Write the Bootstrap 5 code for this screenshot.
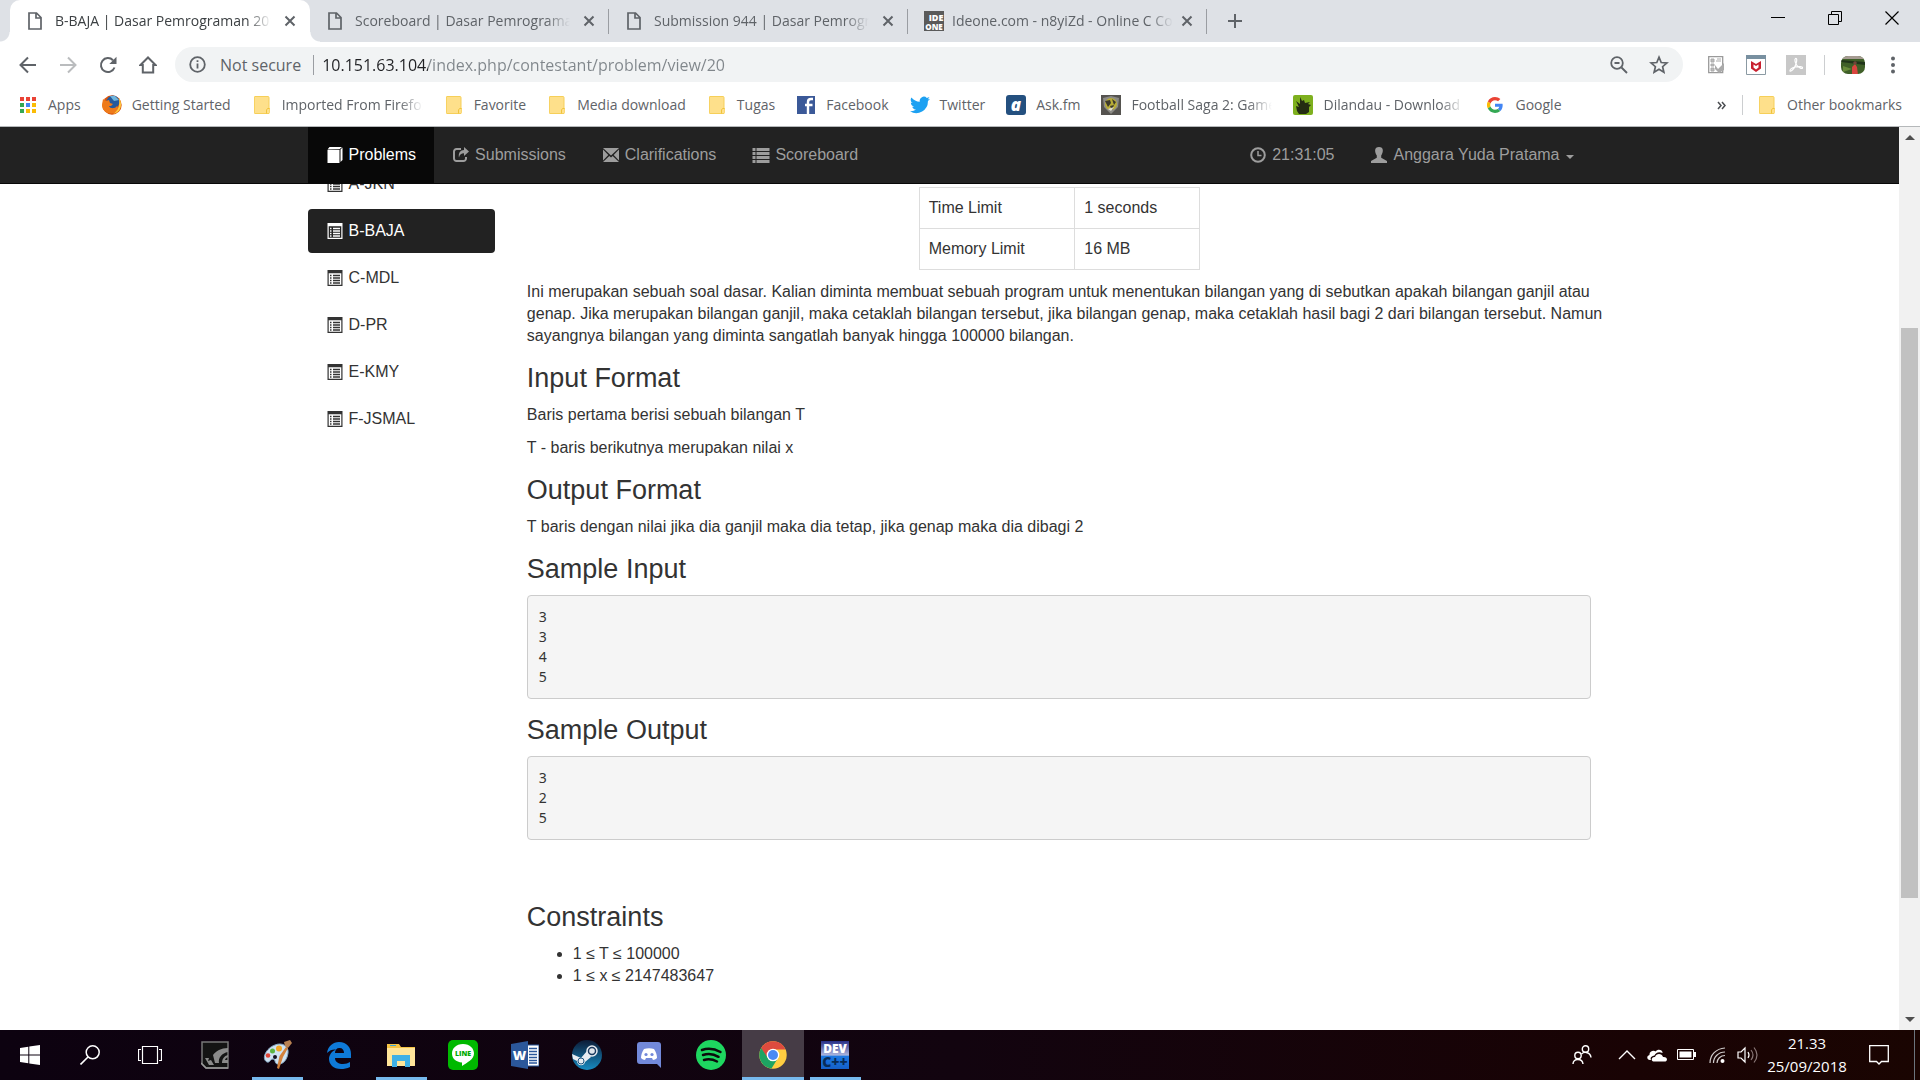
<!DOCTYPE html>
<html lang="id">
<head>
<meta charset="utf-8">
<meta name="viewport" content="width=device-width, initial-scale=1">
<title>B-BAJA | Dasar Pemrograman 2018</title>
<link href="https://cdn.jsdelivr.net/npm/bootstrap@5.3.0/dist/css/bootstrap.min.css" rel="stylesheet">
<style>
:root{--ui:"Segoe UI","Open Sans","Noto Sans",sans-serif;--page:"Liberation Sans",Arial,sans-serif}
body{height:100vh;overflow:hidden;font-family:var(--page);font-size:16px;line-height:22px;color:#333;background:#fff}
button{background:none;border:0;padding:0;color:inherit}
svg{display:block;flex:none}
svg text{font-family:"Open Sans","Noto Sans",sans-serif;font-weight:800;text-anchor:middle}
a{text-decoration:none;color:inherit}
.fade-end{overflow:hidden;white-space:nowrap;-webkit-mask-image:linear-gradient(90deg,#000 calc(100% - 24px),transparent);mask-image:linear-gradient(90deg,#000 calc(100% - 24px),transparent)}

/* browser frame */
.chrome-ui{font-family:var(--ui);color:#5f6368;flex:none}
.tabstrip{background:#dee1e6;height:42px;padding-left:10px;font-size:14px}
.tab-item{width:299px;padding:0 14px 0 18px;gap:13px;position:relative}
.tab-item .fade-end{flex:1}
.tab-item+.tab-item::after{content:"";position:absolute;right:0;top:9px;height:25px;width:1px;background:#9a9da2}
.tab-item.current{background:#fff;color:#3c4043;border-radius:10px 10px 0 0;width:300px}
.tab-item.current::before,.tab-item.current::after{content:"";position:absolute;bottom:0;width:10px;height:10px}
.tab-item.current::before{left:-10px;background:radial-gradient(circle at 0 0,transparent 9px,#fff 10px)}
.tab-item.current::after{right:-10px;background:radial-gradient(circle at 100% 0,transparent 9px,#fff 10px)}
.win-btn{width:57px;height:36px;color:#000}
.toolbar{height:45px;padding:0 7px 0 8px}
.tool-btn{width:40px;height:36px}
.omnibox{background:#f1f3f4;border-radius:18px;height:35px;margin:0 13px 0 7px;padding:0 4px 0 14px;font-size:16px}
.omnibox label{padding:0 12px 0 14px}
.omnibox input{flex:1;border:0;padding:0;outline:0;min-width:0;color:transparent;background:linear-gradient(90deg,#202124 106px,#80868b 106px);-webkit-background-clip:text;background-clip:text}
.vline{width:1px;height:20px;background:#9a9da2}
.bookmarks{height:40px;padding:0 18px 3px 20px;gap:23px;font-size:14px;border-bottom:1px solid #b5b8ba}
.bookmarks a{display:flex;align-items:center;gap:12px;white-space:nowrap}
.bookmarks a svg[width="20"]{margin:0 -2px}
.bookmarks a svg[width="18"]{margin:0 -1px}
.bookmarks .fade-end{width:141px}

/* contest site */
.viewport{flex:1;min-height:0}
.site{flex:1;min-width:0;overflow:hidden}
.wide{width:100%;max-width:1316px;margin:0 auto;padding:0 16px}
.site-nav{background:#222;border-bottom:1px solid #080808;position:relative;z-index:2;padding:0}
.site-nav .nav-link{color:#9d9d9d;padding:17px 18px;height:56px;display:flex;align-items:center;gap:5px;white-space:nowrap}
.site-nav .nav-link.active{color:#fff;background:#080808}
.site-nav .dropdown-toggle::after{margin:4px 0 0 1px;border-width:4px}
.page-row{--bs-gutter-x:32px}
.problem-list{gap:3px;margin-top:-22px}
.problem-list .nav-link{color:#333;padding:11px 18px;display:flex;align-items:center;gap:5px;border-radius:4px}
.problem-list .nav-link.active{color:#fff;background:#222}
.limits{width:281px;margin:3px auto 11px;color:#333;border-color:#ddd}
.limits td{padding:9px;height:41px;color:#333}
.problem p{margin:0 -16px 11px 0}
.problem h3{font-size:27px;line-height:29px;font-weight:400;margin:17px 0 11px}
.problem pre{background:#f5f5f5;border:1px solid #ccc;border-radius:4px;padding:11px;margin:0;font:14px/20px Consolas,"Noto Sans",monospace;color:#333}
.problem .spaced{margin-top:63px}
.problem ul{padding-left:46px;margin:0}
.scroller{width:21px;background:#f1f1f1;color:#505050}
.scroller button{height:21px;display:flex;align-items:center;justify-content:center}
.scroller .thumb{flex:570;margin:0 2px;background:#c1c1c1}

/* taskbar */
.taskbar{height:50px;flex:none;background:linear-gradient(90deg,#0d0210,#12040f 50%,#190304 85%,#1a0502);color:#fff;font-family:var(--ui)}
.taskbar button{width:62px;height:50px;display:flex;align-items:center;justify-content:center}
.taskbar .sys{width:60px}
.taskbar .open{background:linear-gradient(#76b9ed,#76b9ed) center bottom/51px 3px no-repeat}
.taskbar .focused{background:linear-gradient(#76b9ed,#76b9ed) center bottom/100% 3px no-repeat,#463c46}
.taskbar .tray{width:30px}
.taskbar .clock{width:90px;font-size:15px;line-height:23px;display:block;text-align:center}
.taskbar .notes{width:54px}
.taskbar .desktop{width:6px}
</style>
</head>
<body class="d-flex flex-column">
<svg width="0" height="0" class="position-absolute" aria-hidden="true">
<symbol id="i-file" viewBox="0 0 14 18"><path d="M1 1h7.500L13 5.500V17H1z M8 1v5h5" fill="none" stroke="#5f6368" stroke-width="1.700"/></symbol>
<symbol id="i-x" viewBox="0 0 12 12"><path d="M1.500 1.500l9 9M10.500 1.500l-9 9" stroke="#5f6368" stroke-width="2"/></symbol>
<symbol id="i-folder" viewBox="0 0 16 18"><path d="M1 .5h13a1 1 0 0 1 1 1V12l1 1v3.500l-1 1H1a.6.6 0 0 1-.6-.6V1A.6.6 0 0 1 1 .5z" fill="#fee08b" stroke="#f6cf58"/><path d="M12.500 17.500v-3.500l1-1.500h1.500" fill="none" stroke="#f0c33c"/></symbol>
<symbol id="i-list" viewBox="0 0 15 16"><path d="M0 0h15v16H0z M1.200 3.200v11.600h12.600V3.200z" fill="currentColor" fill-rule="evenodd"/><path d="M2.500 5.500h1.500M2.500 8h1.500M2.500 10.500h1.500M2.500 13h1.500M5.500 5.500h7M5.500 8h7M5.500 10.500h7M5.500 13h7" stroke="currentColor" stroke-width="1.300"/></symbol>
</svg>

<header class="chrome-ui">
 <div class="tabstrip d-flex">
  <div class="tab-item current d-flex align-items-center"><svg width="14" height="18"><use href="#i-file"/></svg><span class="fade-end">B-BAJA | Dasar Pemrograman 2018</span><button aria-label="Close tab"><svg width="12" height="12"><use href="#i-x"/></svg></button></div>
  <div class="tab-item d-flex align-items-center"><svg width="14" height="18"><use href="#i-file"/></svg><span class="fade-end">Scoreboard | Dasar Pemrograman</span><button aria-label="Close tab"><svg width="12" height="12"><use href="#i-x"/></svg></button></div>
  <div class="tab-item d-flex align-items-center"><svg width="14" height="18"><use href="#i-file"/></svg><span class="fade-end">Submission 944 | Dasar Pemrograman</span><button aria-label="Close tab"><svg width="12" height="12"><use href="#i-x"/></svg></button></div>
  <div class="tab-item d-flex align-items-center ps-3 gap-2"><svg width="20" height="20" viewBox="0 0 20 20"><path fill="#5a5a5a" d="M0 0h20v20H0z"/><text x="12" y="10" font-size="9" fill="#fff">IDE</text><text x="10" y="19" font-size="8" fill="#fff">ONE</text></svg><span class="fade-end">Ideone.com - n8yiZd - Online C Compiler</span><button aria-label="Close tab"><svg width="12" height="12"><use href="#i-x"/></svg></button></div>
  <button class="ms-3 ps-1" aria-label="New tab"><svg width="16" height="16" viewBox="0 0 16 16"><path d="M8 1v14M1 8h14" stroke="#5f6368" stroke-width="2"/></svg></button>
  <div class="d-flex ms-auto">
   <button class="win-btn" aria-label="Minimize"><svg class="mx-auto" width="14" height="14"><path d="M0 6.500h14" stroke="#000"/></svg></button>
   <button class="win-btn" aria-label="Restore"><svg class="mx-auto" width="14" height="14"><path d="M.5 3.500h10v10H.5zM3.500 3v-2.500h10v10H11" fill="none" stroke="#000"/></svg></button>
   <button class="win-btn" aria-label="Close"><svg class="mx-auto" width="14" height="14"><path d="M.5 .5l13 13M13.500 .5l-13 13" stroke="#000" stroke-width="1.200"/></svg></button>
  </div>
 </div>
 <div class="toolbar d-flex align-items-center">
  <button class="tool-btn" aria-label="Back"><svg class="mx-auto" width="18" height="18" viewBox="0 0 18 18"><path d="M17 9H2M9 1.500L1.500 9 9 16.500" fill="none" stroke="#5f6368" stroke-width="2"/></svg></button>
  <button class="tool-btn" aria-label="Forward"><svg class="mx-auto" width="18" height="18" viewBox="0 0 18 18"><path d="M1 9h15M9 1.500L16.500 9 9 16.500" fill="none" stroke="#babcbe" stroke-width="2"/></svg></button>
  <button class="tool-btn" aria-label="Reload"><svg class="mx-auto" width="18" height="18" viewBox="0 0 18 18"><path d="M15.500 11.500A7 7 0 1 1 14 4.200" fill="none" stroke="#5f6368" stroke-width="2"/><path d="M17.500 .8V8h-7.200z" fill="#5f6368"/></svg></button>
  <button class="tool-btn" aria-label="Home"><svg class="mx-auto" width="18" height="18" viewBox="0 0 18 18"><path d="M1.500 9L9 1.500 16.500 9h-2.300v7.500H3.800V9z" fill="none" stroke="#5f6368" stroke-width="2"/></svg></button>
  <div class="omnibox d-flex align-items-center flex-grow-1">
   <svg width="17" height="17" viewBox="0 0 17 17"><circle cx="8.500" cy="8.500" r="7.300" fill="none" stroke="#5f6368" stroke-width="1.800"/><path d="M8.500 7.500v5M8.500 4.300v1.800" stroke="#5f6368" stroke-width="1.800"/></svg>
   <label for="url" class="text-nowrap">Not secure</label><span class="vline me-2"></span>
   <input id="url" value="10.151.63.104/index.php/contestant/problem/view/20">
   <button class="tool-btn" aria-label="Zoom"><svg class="mx-auto" width="18" height="18" viewBox="0 0 18 18"><circle cx="7" cy="7" r="5.800" fill="none" stroke="#5f6368" stroke-width="1.800"/><path d="M11.500 11.500l5.500 5.500M4.500 7h5" stroke="#5f6368" stroke-width="1.900"/></svg></button>
   <button class="tool-btn" aria-label="Bookmark this page"><svg class="mx-auto" width="20" height="20" viewBox="0 0 20 20"><path d="M10 2.200l2.200 5.300 5.700.5-4.300 3.700 1.300 5.600L10 14.300l-4.900 3 1.300-5.600L2.100 8l5.700-.5z" fill="none" stroke="#5f6368" stroke-width="1.700"/></svg></button>
  </div>
  <button class="tool-btn" aria-label="Extension"><svg class="mx-auto" width="17" height="18" viewBox="0 0 17 18"><path d="M.7 .7h14v16H.7z" fill="#fff" stroke="#9a9a9a" stroke-width="1.300"/><path d="M3 3h3v3H3zM3 8h3v2H3zM3 12h3v3H3zM9 3h4M8 5h5" fill="#bbb" stroke="#aaa"/><path d="M7 9l3 4 6-6v7l-5 3-4-4z" fill="#aaa"/></svg></button>
  <button class="tool-btn" aria-label="McAfee"><svg class="mx-auto" width="20" height="20" viewBox="0 0 20 20"><path d="M.5 .5h19v19H.5z" fill="#fff" stroke="#8b9aa3"/><path d="M0 0h20v4H0z" fill="#7890a0"/><path d="M5 6l5 3 5-3v7.500L10 17l-5-3.500zM7.500 9.500v3l2.500 2 2.500-2v-3L10 11z" fill="#c8202f" fill-rule="evenodd"/></svg></button>
  <button class="tool-btn" aria-label="Acrobat"><svg class="mx-auto" width="20" height="20" viewBox="0 0 20 20"><path d="M0 0h20v20H0z" fill="#c8c8c8"/><path d="M9.500 3.500c-1.500 1 0 5 1.500 7s5 4 5.500 2.500-4-1.800-7.500-1-5.500 3-5 4S8.500 14 10 9s.500-6-.5-5.500z" fill="none" stroke="#fff" stroke-width="1.200"/></svg></button>
  <span class="vline mx-2 opacity-50"></span>
  <button class="tool-btn" aria-label="Profile"><svg class="mx-auto" width="24" height="20" viewBox="0 0 24 20"><defs><clipPath id="av"><rect width="24" height="18" y="1" rx="7"/></clipPath></defs><g clip-path="url(#av)"><path fill="#3f5f28" d="M0 0h24v20H0z"/><path fill="#a69b92" d="M0 0h24v4H0z"/><path d="M0 5l24 2v3L0 7z" fill="#20351a"/><path d="M2 11l9 3-9 3z" fill="#688b3a"/><path fill="#d9453f" d="M11 12l3-3 2 3 1 8h-6z"/><circle cx="14" cy="8" r="1.800" fill="#70473a"/></g></svg></button>
  <button class="tool-btn" aria-label="Menu"><svg class="mx-auto" width="6" height="20"><g fill="#5f6368"><circle cx="3" cy="3.500" r="2"/><circle cx="3" cy="10" r="2"/><circle cx="3" cy="16.500" r="2"/></g></svg></button>
 </div>
 <nav class="bookmarks d-flex align-items-center" aria-label="Bookmarks">
  <a href="#"><svg width="20" height="18" viewBox="0 0 20 18"><g transform="translate(2 0)"><path d="M0 1h4v4H0zM6 1h4v4H6zM12 1h4v4h-4z" fill="#ea4335"/><path d="M0 7h4v4H0zM0 13h4v4H0z" fill="#34a853"/><path d="M6 7h4v4H6z" fill="#4285f4"/><path d="M12 7h4v4h-4zM6 13h4v4H6zM12 13h4v4h-4z" fill="#fbbc05"/></g></svg><span>Apps</span></a>
  <a href="#"><svg width="20" height="20" viewBox="0 0 20 20"><circle cx="10" cy="10" r="9.700" fill="#d9540c"/><circle cx="11" cy="7" r="6.500" fill="#245a9c"/><path d="M8 1l5 0 4 4-5 1z" fill="#6fb5dc"/><path d="M1 4l3 2 3-1 1 3 3 1-2 2-2 0c1 3 6 3 8 0 2 2 1 6-3 7-6 2-12-2-12-8z" fill="#ee7a1a"/><path d="M17 3c4 6 2 15-6 16 5-3 7-8 6-16z" fill="#ffcb3d"/></svg><span>Getting Started</span></a>
  <a href="#"><svg width="16" height="18"><use href="#i-folder"/></svg><span class="fade-end">Imported From Firefox</span></a>
  <a href="#"><svg width="16" height="18"><use href="#i-folder"/></svg><span>Favorite</span></a>
  <a href="#"><svg width="16" height="18"><use href="#i-folder"/></svg><span>Media download</span></a>
  <a href="#"><svg width="16" height="18"><use href="#i-folder"/></svg><span>Tugas</span></a>
  <a href="#"><svg width="18" height="18" viewBox="0 0 18 18"><path fill="#3b5998" d="M0 0h18v18H0z"/><path d="M16 3h-2c-2.500 0-3 1.500-3 3v12M8 9h7.500" fill="none" stroke="#fff" stroke-width="2.400"/></svg><span>Facebook</span></a>
  <a href="#"><svg width="20" height="18" viewBox="0 0 24 20"><path fill="#1da1f2" d="M24 2.400a10 10 0 0 1-2.800.8A5 5 0 0 0 23.300.5a10 10 0 0 1-3.100 1.200 4.900 4.900 0 0 0-8.400 4.500A14 14 0 0 1 1.700 1a4.900 4.900 0 0 0 1.500 6.600A5 5 0 0 1 1 7c0 2.400 1.600 4.400 3.900 4.900a5 5 0 0 1-2.200.1 4.900 4.900 0 0 0 4.600 3.400A10 10 0 0 1 0 17.500a14 14 0 0 0 21.500-12.400A10 10 0 0 0 24 2.400z"/></svg><span>Twitter</span></a>
  <a href="#"><svg width="20" height="20" viewBox="0 0 20 20"><rect width="20" height="20" rx="3" fill="#24507f"/><text x="10" y="15.500" font-size="17" font-style="italic" fill="#fff">a</text></svg><span>Ask.fm</span></a>
  <a href="#"><svg width="20" height="20" viewBox="0 0 20 20"><path fill="#55534f" d="M0 0h20v20H0z"/><path d="M2 3l8-2 8 2-1 9-7 7-7-7z" fill="#8c8b86"/><circle cx="10" cy="9" r="6" fill="#b8ad37"/><path d="M4 6l5-1 1 3-3 4zM11 4l4 3-2 3zM9 11l4-1-2 5z" fill="#3d3a2c"/><path d="M7 14l6-2-3 4z" fill="#e0ddd0"/></svg><span class="fade-end">Football Saga 2: Games</span></a>
  <a href="#"><svg width="20" height="20" viewBox="0 0 20 20"><rect width="20" height="20" rx="2" fill="#7eb01e"/><path d="M7 2l2 4 2-1 1 3 5-1-2 2 3 1-2 2 0 5-3 2H6l-2-3-1-5 3 1-3-6 4 3z" fill="#242c12"/></svg><span class="fade-end">Dilandau - Download</span></a>
  <a href="#"><svg width="16" height="16" viewBox="0 0 48 48"><path fill="#ea4335" d="M24 9.500c3.500 0 6.700 1.200 9.200 3.600l6.900-6.900C35.900 2.400 30.500 0 24 0 14.600 0 6.500 5.400 2.600 13.200l8 6.200C12.400 13.700 17.700 9.500 24 9.500z"/><path fill="#4285f4" d="M47 24.600c0-1.600-.2-3.100-.4-4.600H24v9h12.900c-.6 3-2.200 5.500-4.700 7.200l7.700 6C44.400 38 47 31.800 47 24.600z"/><path fill="#fbbc05" d="M10.500 28.600a14.500 14.500 0 0 1 0-9.200l-8-6.200a24 24 0 0 0 0 21.600z"/><path fill="#34a853" d="M24 48c6.500 0 11.900-2.100 15.900-5.800l-7.700-6c-2.200 1.500-4.900 2.300-8.200 2.300-6.300 0-11.600-4.200-13.500-9.900l-8 6.200C6.500 42.600 14.600 48 24 48z"/></svg><span>Google</span></a>
  <div class="d-flex align-items-center gap-3 ms-auto"><button aria-label="More bookmarks"><svg width="9" height="9"><path d="M1 1l3 3.500L1 8M5 1l3 3.500L5 8" fill="none" stroke="#4a4d51" stroke-width="1.500"/></svg></button><span class="vline opacity-50"></span>
  <a href="#"><svg width="16" height="18"><use href="#i-folder"/></svg><span>Other bookmarks</span></a></div>
 </nav>
</header>

<div class="viewport d-flex">
 <div class="site">
  <nav class="site-nav navbar">
   <div class="wide d-flex">
    <ul class="nav">
     <li><a class="nav-link active" href="#"><svg width="18" height="16" viewBox="0 0 15 16"><path d="M0 3h12v13H0zM0 2.500L2 0h12.500L12 2.300zM13 2.500l2-2V13l-2 2z" fill="currentColor"/></svg>Problems</a></li>
     <li><a class="nav-link" href="#"><svg width="18" height="16" viewBox="0 0 16 16"><path d="M8 2H3.500A2.500 2.500 0 0 0 1 4.500v7A2.500 2.500 0 0 0 3.500 14h7a2.500 2.500 0 0 0 2.500-2.500V10" fill="none" stroke="currentColor" stroke-width="2"/><path d="M11 0l5 4.500L11 9V6.200C8.500 6.200 6.500 7.500 6 10.500 5 6 7.500 3 11 3z" fill="currentColor"/></svg>Submissions</a></li>
     <li><a class="nav-link" href="#"><svg width="18" height="14" viewBox="0 0 16 14"><path d="M0 0h16L8 7.500zM0 1.500L5.300 7 0 12.500zM16 1.500L10.700 7l5.300 5.500zM0 14l6.300-6L8 9.500 9.700 8l6.300 6z" fill="currentColor"/></svg>Clarifications</a></li>
     <li><a class="nav-link" href="#"><svg width="18" height="15" viewBox="0 0 17 15"><path d="M0 0h3v3H0zM4 0h13v3H4zM0 4h3v3H0zM4 4h13v3H4zM0 8h3v3H0zM4 8h13v3H4zM0 12h3v3H0zM4 12h13v3H4z" fill="currentColor"/></svg>Scoreboard</a></li>
    </ul>
    <ul class="nav ms-auto">
     <li><span class="nav-link"><svg width="18" height="16" viewBox="0 0 16 16"><circle cx="8" cy="8" r="6.800" fill="none" stroke="currentColor" stroke-width="2"/><path d="M8 4v4.500h3.500" fill="none" stroke="currentColor" stroke-width="1.500"/></svg>21:31:05</span></li>
     <li><a class="nav-link dropdown-toggle" href="#"><svg width="18" height="16" viewBox="0 0 16 16"><path d="M8 0c5 0 4.500 5 2.200 8.500v2.300L16 14v2H0v-2l5.800-3.200V8.500C3.500 5 3 0 8 0z" fill="currentColor"/></svg>Anggara Yuda Pratama</a></li>
    </ul>
   </div>
  </nav>
  <div class="wide">
   <div class="row page-row">
    <aside class="col-2">
     <nav class="nav flex-column problem-list">
      <a class="nav-link" href="#"><svg width="18" height="16"><use href="#i-list"/></svg>A-JKN</a>
      <a class="nav-link active" href="#"><svg width="18" height="16"><use href="#i-list"/></svg>B-BAJA</a>
      <a class="nav-link" href="#"><svg width="18" height="16"><use href="#i-list"/></svg>C-MDL</a>
      <a class="nav-link" href="#"><svg width="18" height="16"><use href="#i-list"/></svg>D-PR</a>
      <a class="nav-link" href="#"><svg width="18" height="16"><use href="#i-list"/></svg>E-KMY</a>
      <a class="nav-link" href="#"><svg width="18" height="16"><use href="#i-list"/></svg>F-JSMAL</a>
     </nav>
    </aside>
    <main class="col-10 problem">
     <table class="table table-bordered limits">
      <tr><td>Time Limit</td><td>1 seconds</td></tr>
      <tr><td>Memory Limit</td><td>16 MB</td></tr>
     </table>
     <p>Ini merupakan sebuah soal dasar. Kalian diminta membuat sebuah program untuk menentukan bilangan yang di sebutkan apakah bilangan ganjil atau genap. Jika merupakan bilangan ganjil, maka cetaklah bilangan tersebut, jika bilangan genap, maka cetaklah hasil bagi 2 dari bilangan tersebut. Namun sayangnya bilangan yang diminta sangatlah banyak hingga 100000 bilangan.</p>
     <h3>Input Format</h3>
     <p>Baris pertama berisi sebuah bilangan T</p>
     <p>T - baris berikutnya merupakan nilai x</p>
     <h3>Output Format</h3>
     <p>T baris dengan nilai jika dia ganjil maka dia tetap, jika genap maka dia dibagi 2</p>
     <h3>Sample Input</h3>
<pre>3
3
4
5</pre>
     <h3>Sample Output</h3>
<pre>3
2
5</pre>
     <h3 class="spaced">Constraints</h3>
     <ul><li>1 ≤ T ≤ 100000</li><li>1 ≤ x ≤ 2147483647</li></ul>
    </main>
   </div>
  </div>
 </div>
 <div class="scroller d-flex flex-column">
  <button aria-label="Scroll up"><svg width="10" height="5"><path d="M0 5l5-5 5 5z" fill="currentColor"/></svg></button>
  <div style="flex:180"></div><div class="thumb"></div><div style="flex:111"></div>
  <button aria-label="Scroll down"><svg width="10" height="5"><path d="M0 0l5 5 5-5z" fill="currentColor"/></svg></button>
 </div>
</div>

<footer class="taskbar d-flex">
 <button class="sys" aria-label="Start"><svg width="20" height="20" viewBox="0 0 20 20"><path d="M0 3l8.300-1.200v7.700H0zM9.300 1.600L20 0v9.500H9.300zM0 10.500h8.300v7.700L0 17zM9.300 10.500H20V20L9.300 18.400z" fill="#fff"/></svg></button>
 <button class="sys" aria-label="Search"><svg width="20" height="20" viewBox="0 0 20 20"><circle cx="12.700" cy="7.300" r="6.500" fill="none" stroke="#fff" stroke-width="1.500"/><path d="M8 12L.5 19.500" stroke="#fff" stroke-width="1.600"/></svg></button>
 <button class="sys me-1" aria-label="Task view"><svg width="24" height="18" viewBox="0 0 24 18"><path d="M4.500 .5h15v17h-15zM3 3.500H.5v11H3M21 3.500h2.500v11H21" fill="none" stroke="#fff" stroke-width="1.200"/></svg></button>
 <button aria-label="NVIDIA"><svg width="28" height="28" viewBox="0 0 28 28"><path d="M1 1h26v26H5l-4-4z" fill="#141414" stroke="#777" stroke-width="1.500"/><path d="M27 7c-7 0-12 3-15 7l2 8h4c-1-5 3-10 9-11zM27 14c-4 1-6 4-6 8h6v-3h-3c0-1 1-2 3-3zM4 17h4l-1 3 3-1 3 5H8z" fill="#8b8b8b"/><path d="M0 22l5 5h22" fill="none" stroke="#999" stroke-width="1.500"/></svg></button>
 <button class="open" aria-label="Paint"><svg width="30" height="30" viewBox="0 0 30 30"><path d="M13 5c7-3 14 1 13 8-1 8-6 12-11 11-3-1-1-5-4-5s-3 4-6 3C-1 19 4 8 13 5z" fill="#cfe3f2" stroke="#86a9c4"/><circle cx="6" cy="15.500" r="2.300" fill="#df4538"/><circle cx="10.500" cy="11" r="2.500" fill="#5cb543"/><circle cx="17" cy="8.500" r="3" fill="#f2a628"/><circle cx="13" cy="17" r="2" fill="#151020"/><path d="M15 28l2.500-12 6.500-9 2 1-5 9-4 12z" fill="#d2813c"/><path d="M23 6l-1-4 6-2 2 3-4 5z" fill="#b98252"/></svg></button>
 <button aria-label="Edge"><svg width="26" height="28" viewBox="0 0 26 28"><path d="M1 12C2 5 7 1 13 1c8 0 12 6 12 12v4H9c0 4 4 6 8 6 3 0 5-1 7-2v5c-3 1.500-6 2-9 2-8 0-12-5-12-10 0-4 3-8 7-9.500C7 8 4 9 1 12zM9 12h9c0-3-1.500-5-4.500-5S9 9 9 12z" fill="#0e7ad8" fill-rule="evenodd"/></svg></button>
 <button class="open" aria-label="File Explorer"><svg width="28" height="24" viewBox="0 0 28 24"><path d="M0 1h12l2 3h14v19H0z" fill="#f5c445"/><path d="M0 5h28v17a1 1 0 0 1-1 1H0z" fill="#ffe59a"/><path d="M3 2h6v1H3z" fill="#3aa7d8"/><path d="M5 24V12h18v12h-5v-6h-8v6z" fill="#3fb0e6"/></svg></button>
 <button aria-label="LINE"><svg width="30" height="30" viewBox="0 0 30 30"><rect width="30" height="30" rx="5" fill="#00b900"/><path d="M15 4c7 0 11 4.500 11 9.500 0 6-7 9-12 12.500v-3.500C8 22 4 18.500 4 13.500S8 4 15 4z" fill="#fff"/><text x="15" y="16" font-size="7" fill="#00a900">LINE</text></svg></button>
 <button aria-label="Word"><svg width="28" height="28" viewBox="0 0 28 28"><path d="M16 4h12v21H16z" fill="#fff" stroke="#2b579a"/><path d="M18 7.500h8M18 10.500h8M18 13.500h8M18 16.500h8M18 19.500h8M18 22h8" stroke="#2b579a" stroke-width="1.300"/><path d="M0 3l17-3v28L0 25z" fill="#2b579a"/><text x="8.500" y="19" font-size="13" fill="#fff">W</text></svg></button>
 <button aria-label="Steam"><svg width="30" height="30" viewBox="0 0 30 30"><defs><linearGradient id="st" x2="0" y2="1"><stop stop-color="#0c1b36"/><stop offset="1" stop-color="#188cc2"/></linearGradient></defs><circle cx="15" cy="15" r="15" fill="url(#st)"/><path d="M0 14l9 4 6-7 4 6-6 5c-1 5-8 4-8-1L1 19z" fill="#e8edf2"/><circle cx="20" cy="11" r="5" fill="#1b3a5e" stroke="#e8edf2" stroke-width="1.500"/><circle cx="20" cy="11" r="2.800" fill="#dfe5ea"/><circle cx="9" cy="21" r="3" fill="none" stroke="#1c5480"/></svg></button>
 <button aria-label="Discord"><svg width="24" height="26" viewBox="0 0 24 26"><path d="M3 0h18a3 3 0 0 1 3 3v23l-4-4H3a3 3 0 0 1-3-3V3a3 3 0 0 1 3-3z" fill="#7289da"/><path d="M7 7c3-1 7-1 10 0 2 3 3 6 3 9-1 1-3 2-4 2l-1-2H9l-1 2c-1 0-3-1-4-2 0-3 1-6 3-9z" fill="#fff"/><circle cx="9" cy="12.500" r="1.600" fill="#7289da"/><circle cx="15" cy="12.500" r="1.600" fill="#7289da"/></svg></button>
 <button aria-label="Spotify"><svg width="30" height="30" viewBox="0 0 30 30"><circle cx="15" cy="15" r="15" fill="#1ed760"/><path d="M6 10c6-2 13-1 18.500 2M7 15c5-1.500 11-.8 15.500 1.800M8 20c4.500-1.200 9-.6 13 1.500" fill="none" stroke="#0c0c0c" stroke-width="2.500" stroke-linecap="round"/></svg></button>
 <button class="focused" aria-label="Chrome"><svg width="28" height="28" viewBox="0 0 28 28"><circle cx="14" cy="14" r="13.700" fill="#ffcd41"/><path d="M14 .3A13.700 13.700 0 0 1 26.500 8.500H14L7.500 16 2 7.500A13.700 13.700 0 0 1 14 .3z" fill="#dd4b3e"/><path d="M2.200 7A13.700 13.700 0 0 0 12.500 27.600L19 17l-9.500 1z" fill="#1da462"/><circle cx="14" cy="14" r="6.300" fill="#fff"/><circle cx="14" cy="14" r="5" fill="#4a8af4"/></svg></button>
 <button class="open" aria-label="Dev-C++"><svg width="30" height="30" viewBox="0 0 30 30"><defs><linearGradient id="dv" x2="0" y2="1"><stop stop-color="#262e86"/><stop offset=".5" stop-color="#aab4dc"/><stop offset=".55" stop-color="#1b78e2"/><stop offset="1" stop-color="#1560c8"/></linearGradient></defs><path d="M1 1h28v28H1z" fill="url(#dv)"/><text x="15" y="13" font-size="12" fill="#fff">DEV</text><text x="15" y="27" font-size="14" fill="#082c58">C++</text></svg></button>
 <div class="d-flex ms-auto">
  <button class="sys" aria-label="People"><svg width="20" height="20" viewBox="0 0 20 20"><g fill="none" stroke="#fff" stroke-width="1.400"><circle cx="13.500" cy="4" r="3.200"/><circle cx="6" cy="10.500" r="3.200"/><path d="M1 19c0-6 9.500-6 10 0M9.500 9c3-3 9-1.500 9.500 3.500"/></g></svg></button>
  <button class="tray" aria-label="Show hidden icons"><svg width="18" height="10"><path d="M1 9l8-8 8 8" fill="none" stroke="#fff" stroke-width="1.400"/></svg></button>
  <button class="tray" aria-label="OneDrive"><svg width="20" height="13" viewBox="0 0 20 13"><path d="M3 11C0 11-1 7 2.500 6 2 2 7 1 8.500 2.500 11-1 16 1 15.500 4c-4-2-7 0-8 2.500C4 7 3 9 4 11z" fill="#fff"/><path d="M6.500 12.500C3.500 12 4.500 7.500 8 8c1-4 7-4 8 0 5-.5 5 4.500 1.500 4.500z" fill="#fff"/></svg></button>
  <button class="tray" aria-label="Battery"><svg width="20" height="12"><path d="M.5 .5h16v10H.5z" fill="none" stroke="#fff"/><path d="M2.500 2.500h12v6h-12zM17 3h2v5h-2z" fill="#fff"/></svg></button>
  <button class="tray" aria-label="Network"><svg width="16" height="16" viewBox="0 0 16 16"><g fill="none" stroke="#fff" stroke-width="1.200"><path d="M1 16C1 8 7 1.500 16 1M4.500 16c0-6 5-11 11.500-11M8 16c0-4 3.500-7.500 8-7.500" opacity=".8"/></g><circle cx="13.500" cy="14" r="2" fill="#fff"/></svg></button>
  <button class="tray" aria-label="Volume"><svg width="21" height="18" viewBox="0 0 21 18"><path d="M1 6h3l4-4v14l-4-4H1z" fill="none" stroke="#fff" stroke-width="1.200"/><path d="M11 6q2 3 0 6" fill="none" stroke="#fff" stroke-width="1.200"/><path d="M14 4q4 5 0 10M17 1.500q6 7.500 0 15" fill="none" stroke="#8a7878" stroke-width="1.200"/></svg></button>
  <button class="clock" aria-label="Clock">21.33<br>25/09/2018</button>
  <button class="notes" aria-label="Notifications"><svg width="20" height="20" viewBox="0 0 20 20"><path d="M.7 .7h18.600v15.800H12.500L10 19l-2.500-2.500H.7z" fill="none" stroke="#fff" stroke-width="1.300"/></svg></button>
  <button aria-label="Show desktop" class="desktop border-start border-secondary ms-2"></button>
 </div>
</footer>
<script src="https://cdn.jsdelivr.net/npm/bootstrap@5.3.0/dist/js/bootstrap.bundle.min.js"></script>
</body>
</html>
